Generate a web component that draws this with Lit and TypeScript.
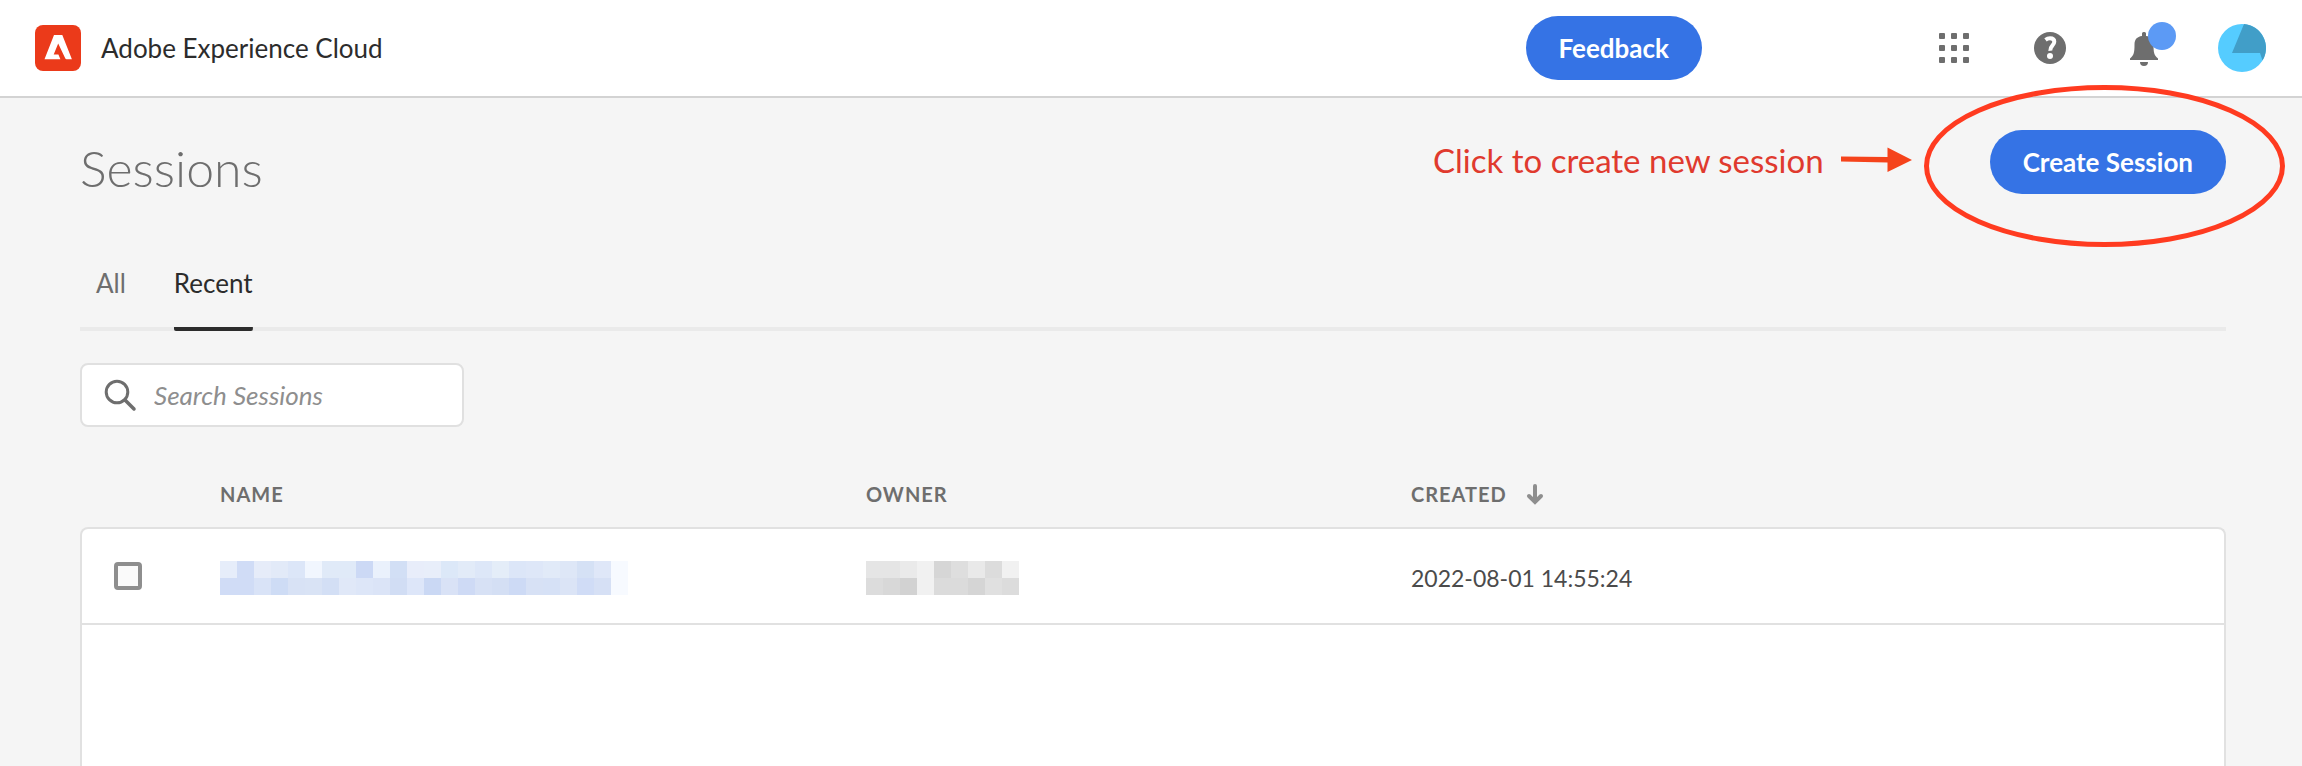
import { LitElement, html, css, svg } from "lit";
import { customElement, state } from "lit/decorators.js";

interface Session {
  name: string[][];
  owner: string[][];
  created: string;
}

const SESSIONS: Session[] = [
  {
    name: [
      "e6edfa d0dcf6 e6ecf9 e2eaf8 dce6f8 f1f6fe e0eaf8 e0eaf8 ccd9f5 eaf1fc d2dff5 e8edfa e8eefa dce8f8 e2ebf8 dde7f8 e4edf8 dce6f8 dee7f8 e1eaf8 dee7f7 d5e1f5 dfe7f8 f7faff".split(" "),
      "d0dcf6 d0dcf6 d9e3f7 cedcf5 d8e2f5 d9e3f5 d3dff5 e0e8f8 dde6f8 dbe4f7 d1ddf4 dde6f9 cad8f4 d9e2f6 cedaf5 d7e1f5 d4dff4 cddaf5 d7e1f5 d6e1f6 dbe4f6 d0dcf6 d6e0f5 f7faff".split(" "),
    ],
    owner: [
      "e5e5e5 e5e5e5 eaeaea f1f1f1 d6d6d6 dedede e9e9e9 dcdcdc f1f1f1".split(" "),
      "dcdcdc d8d8d8 d2d2d2 f1f1f1 dbdbdb dbdbdb d5d5d5 e0e0e0 dcdcdc".split(" "),
    ],
    created: "2022-08-01 14:55:24",
  },
];

@customElement("masked-text")
class MaskedText extends LitElement {
  static properties = { rows: { attribute: false } };
  declare rows: string[][];

  static styles = css`
    :host {
      display: block;
    }
    .mosaic {
      display: block;
    }
  `;

  render() {
    const w = this.rows[0].length * 17;
    const h = this.rows.length * 17;
    return html`<svg class="mosaic" width=${w} height=${h} shape-rendering="crispEdges" aria-hidden="true">
      ${this.rows.map((row, y) =>
        row.map((c, x) => svg`<rect x=${x * 17} y=${y * 17} width="17" height="17" fill=${"#" + c}></rect>`)
      )}
    </svg>`;
  }
}

@customElement("app-root")
class AppRoot extends LitElement {
  @state() private tab = "Recent";

  static styles = css`
    :host {
      display: flex;
      flex-direction: column;
      min-height: 100vh;
      box-sizing: border-box;
      background: #f5f5f5;
      color: #2c2c2c;
      font-family: Lato, "Open Sans", sans-serif;
      font-size: 26px;
      line-height: 32px;
    }
    * {
      box-sizing: border-box;
    }
    button {
      font: inherit;
      border: 0;
      cursor: pointer;
    }
    svg {
      display: block;
      overflow: visible;
    }
    .topbar {
      display: flex;
      align-items: center;
      height: 98px;
      padding: 0 12px 0 35px;
      background: #fff;
      border-bottom: 2px solid #d3d3d3;
    }
    .brand {
      display: flex;
      align-items: center;
      gap: 20px;
      margin-right: auto;
      color: inherit;
      text-decoration: none;
    }
    .cta {
      height: 64px;
      padding: 0 33px;
      border-radius: 32px;
      background: #3573e5;
      color: #fff;
      font-weight: 700;
    }
    .tools {
      display: flex;
      margin-left: 204px;
    }
    .tool {
      display: flex;
      align-items: center;
      justify-content: center;
      width: 96px;
      height: 64px;
      padding: 0;
      background: none;
    }
    .page {
      display: flex;
      flex: 1;
      flex-direction: column;
      padding: 32px 76px 0 80px;
    }
    .heading {
      display: flex;
      align-items: flex-start;
      height: 72px;
    }
    .title {
      margin: 6px auto 0 0;
      color: #6e6e6e;
      font-size: 50px;
      font-weight: 300;
      line-height: 64px;
    }
    .note {
      display: flex;
      align-items: center;
      gap: 16px;
      height: 60px;
      margin-right: 78px;
      color: #e03a2e;
      font-size: 33px;
    }
    .create {
      position: relative;
    }
    .ring {
      position: absolute;
      top: -45px;
      left: -66px;
      pointer-events: none;
    }
    .tabs {
      display: flex;
      gap: 48px;
      margin-top: 52px;
      padding-left: 16px;
      border-bottom: 4px solid #eaeaea;
    }
    .tab {
      height: 77px;
      margin-bottom: -4px;
      padding: 0 0 20px;
      background: none;
      color: #6e6e6e;
    }
    .tab[aria-selected="true"] {
      color: #2c2c2c;
      background: linear-gradient(#2c2c2c, #2c2c2c) bottom / 100% 4px no-repeat;
      border-radius: 2px;
    }
    .search {
      display: flex;
      align-items: center;
      gap: 18px;
      width: 384px;
      height: 64px;
      margin-top: 32px;
      padding: 0 22px;
      background: #fff;
      border: 2px solid #e0e0e0;
      border-radius: 8px;
    }
    .field {
      flex: 1;
      min-width: 0;
      padding: 0;
      border: 0;
      outline: 0;
      background: none;
      color: inherit;
      font: inherit;
    }
    .field::placeholder {
      color: #8e8e8e;
      font-style: italic;
      opacity: 1;
    }
    .table {
      display: flex;
      flex: 1;
      flex-direction: column;
      margin-top: 50px;
    }
    .row {
      display: grid;
      grid-template-columns: 138px 646fr 545fr 813fr;
      align-items: center;
    }
    .head .row {
      height: 50px;
      padding: 0 2px 16px;
    }
    .body {
      display: block;
      flex: 1;
      background: #fff;
      border: 2px solid #e1e1e1;
      border-bottom: 0;
      border-radius: 8px 8px 0 0;
    }
    .body .row {
      height: 96px;
      border-bottom: 2px solid #e1e1e1;
    }
    th,
    td {
      padding: 0;
      text-align: left;
    }
    th {
      display: flex;
      align-items: center;
      gap: 20px;
      color: #6e6e6e;
      font-size: 20px;
      font-weight: 700;
      letter-spacing: 1px;
    }
    .pick {
      padding-left: 32px;
    }
    .value {
      padding-top: 4px;
      color: #4b4b4b;
      font-size: 23px;
    }
    .check {
      display: block;
      width: 28px;
      height: 28px;
      margin: 0;
      appearance: none;
      background: #fafafa;
      border: 4px solid #8e8e8e;
      border-radius: 4px;
    }
    .check:checked {
      background: #3573e5;
    }
  `;

  render() {
    return html`
      <header class="topbar">
        <a class="brand" href="#">
          <svg width="46" height="46" viewBox="0 0 46 46" aria-hidden="true">
            <rect width="46" height="46" rx="8" fill="#eb3a1a"></rect>
            <path fill="#fff" d="M19 10h8.300l9.600 24.300h-5.300q-1 0-1.400-1L23.200 18.500 18.700 29.400h4.700l2 4.900H9.500z"></path>
          </svg>
          <span>Adobe Experience Cloud</span>
        </a>
        <button class="cta">Feedback</button>
        <nav class="tools" aria-label="Tools">
          <button class="tool" aria-label="Apps">
            <svg width="30" height="30" viewBox="0 0 30 30" fill="#6e6e6e">
              ${[0, 12, 24].map((y) =>
                [0, 12, 24].map((x) => svg`<rect x=${x} y=${y} width="6" height="6" rx="1"></rect>`)
              )}
            </svg>
          </button>
          <button class="tool" aria-label="Help">
            <svg width="32" height="32" viewBox="0 0 32 32">
              <circle cx="16" cy="16" r="16" fill="#6e6e6e"></circle>
              <path d="M11.500 7.800Q13.500 6.300 16 6.300C19 6.300 20.300 7.800 20.300 9.800C20.300 13.300 15.800 13.800 16.300 18.800" fill="none" stroke="#fff" stroke-width="4"></path>
              <circle cx="16" cy="24" r="3" fill="#fff"></circle>
            </svg>
          </button>
          <button class="tool" aria-label="Notifications">
            <svg width="64" height="48" viewBox="0 0 64 48">
              <path fill="#6e6e6e" d="M28 9.500q0-1.500 1.500-1.500h1q1.500 0 1.500 1.500V12c5 .6 7.500 3.500 7.500 8.500 0 8 .5 10.500 4.500 14V36H16v-1.500c4-3.500 4.500-6 4.500-14 0-5 2.500-7.900 7.500-8.500zM26 38h8a4 4 0 0 1-8 0z"></path>
              <circle cx="48" cy="12" r="14" fill="#5c9af5"></circle>
            </svg>
          </button>
          <button class="tool" aria-label="Account">
            <svg width="48" height="48" viewBox="0 0 48 48">
              <circle cx="24" cy="24" r="24" fill="#55ccff"></circle>
              <path fill="#419ec8" d="M26 .1A24 24 0 0 1 44.500 36.500L42 29H14z"></path>
            </svg>
          </button>
        </nav>
      </header>
      <main class="page">
        <div class="heading">
          <h1 class="title">Sessions</h1>
          <div class="note">
            <span>Click to create new session</span>
            <svg width="72" height="26" viewBox="0 0 72 26" aria-hidden="true">
              <path fill="#f5431b" d="M1 9.500L47.500 10V0.500L72 13L47.500 25V15.500L1 14.500z"></path>
            </svg>
          </div>
          <div class="create">
            <button class="cta">Create Session</button>
            <svg class="ring" width="361" height="162" viewBox="0 0 361 162" aria-hidden="true">
              <ellipse cx="180.500" cy="81" rx="178" ry="78.500" fill="none" stroke="#ff3b20" stroke-width="5"></ellipse>
            </svg>
          </div>
        </div>
        <div class="tabs" role="tablist">
          ${["All", "Recent"].map(
            (t) => html`<button class="tab" role="tab" aria-selected=${t === this.tab} @click=${() => (this.tab = t)}>${t}</button>`
          )}
        </div>
        <label class="search">
          <svg width="32" height="32" viewBox="0 0 32 32" fill="none" stroke="#6e6e6e" aria-hidden="true">
            <circle cx="13" cy="13" r="10.800" stroke-width="3"></circle>
            <path d="M21 21l9 9" stroke-width="3.500" stroke-linecap="round"></path>
          </svg>
          <input class="field" type="search" placeholder="Search Sessions" aria-label="Search Sessions" />
        </label>
        <table class="table">
          <thead class="head">
            <tr class="row">
              <th></th>
              <th>NAME</th>
              <th>OWNER</th>
              <th>
                CREATED
                <svg width="16" height="20" viewBox="0 0 16 20" fill="none" stroke="#8e8e8e" stroke-width="4" stroke-linecap="round" aria-hidden="true">
                  <path d="M8 2v15M2 12l6 6 6-6"></path>
                </svg>
              </th>
            </tr>
          </thead>
          <tbody class="body">
            ${SESSIONS.map(
              (s) => html`<tr class="row">
                <td class="pick"><input class="check" type="checkbox" aria-label="Select session" /></td>
                <td class="value"><masked-text .rows=${s.name}></masked-text></td>
                <td class="value"><masked-text .rows=${s.owner}></masked-text></td>
                <td class="value">${s.created}</td>
              </tr>`
            )}
          </tbody>
        </table>
      </main>
    `;
  }
}
